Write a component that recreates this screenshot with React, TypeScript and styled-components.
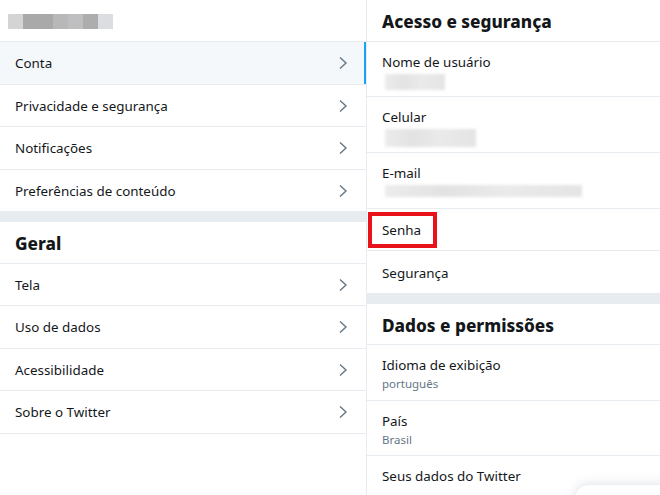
import React from "react";
import styled, { createGlobalStyle } from "styled-components";

const Global = createGlobalStyle`
  html, body { margin: 0; padding: 0; background: #ffffff; }
  body { font-family: "Noto Sans", "Open Sans", sans-serif; color: #14171a; }
  * { box-sizing: border-box; }
`;

const Page = styled.div`
  position: relative;
  display: flex;
  width: 660px;
  height: 495px;
  overflow: hidden;
  background: #fff;
`;

const LeftColumn = styled.div`
  width: 367px;
  flex: none;
  display: flex;
  flex-direction: column;
  border-right: 1px solid #e6ecf0;
`;

const RightColumn = styled.div`
  flex: 1;
  display: flex;
  flex-direction: column;
`;

const TopBar = styled.div`
  height: 42px;
  flex: none;
  display: flex;
  align-items: center;
  padding-left: 8px;
  border-bottom: 1px solid #e6ecf0;
`;

const BlurName = styled.div`
  display: flex;
  height: 15px;
  margin-top: 2px;
  filter: blur(0.6px);
`;

const BlurCell = styled.div<{ $w: number; $c: string }>`
  width: ${(p) => p.$w}px;
  height: 100%;
  background: ${(p) => p.$c};
`;

const MenuRow = styled.div<{ $active?: boolean }>`
  height: 42.5px;
  flex: none;
  display: flex;
  align-items: center;
  justify-content: space-between;
  padding: 1px 18px 0 15px;
  border-bottom: 1px solid #e6ecf0;
  background: ${(p) => (p.$active ? "#f5f8fa" : "#fff")};
  box-shadow: ${(p) => (p.$active ? "inset -2px 0 0 #1da1f2" : "none")};
  font-size: 13.4px;
`;

const Chevron = styled.svg`
  width: 10px;
  height: 14px;
  color: #657786;
`;

const Band = styled.div`
  height: 10px;
  flex: none;
  background: #e6ecf0;
`;

const SectionHeader = styled.div`
  height: 41.5px;
  flex: none;
  display: flex;
  align-items: center;
  padding: 3px 0 0 15px;
  border-bottom: 1px solid #e6ecf0;
  font-size: 17.2px;
  font-weight: 800;
  color: #14171a;
`;

const InfoRow = styled.div<{ $tall?: boolean }>`
  height: ${(p) => (p.$tall ? "55.7px" : "42.5px")};
  flex: none;
  display: flex;
  flex-direction: column;
  justify-content: ${(p) => (p.$tall ? "flex-start" : "center")};
  padding: ${(p) => (p.$tall ? "10px 15px 0" : "2px 15px 0")};
  border-bottom: 1px solid #e6ecf0;
  font-size: 13.4px;
`;

const Label = styled.div`
  line-height: 20px;
  color: #14171a;
`;

const SubText = styled.div`
  font-size: 11.5px;
  line-height: 16px;
  color: #657786;
  margin-top: 1px;
`;

const BlurValue = styled.div<{ $w: number; $h: number }>`
  width: ${(p) => p.$w}px;
  height: ${(p) => p.$h}px;
  margin-top: 2px;
  margin-left: 3px;
  background: linear-gradient(90deg, #ececec 0%, #e2e2e2 30%, #eaeaea 60%, #e4e4e4 100%);
  filter: blur(1.5px);
`;

const Highlight = styled.span`
  align-self: flex-start;
  margin-left: -14px;
  padding: 4px 12px 4px 10px;
  border: 4px solid #e8121a;
  line-height: 20px;
`;

const Drawer = styled.div`
  position: absolute;
  right: -20px;
  bottom: -30px;
  width: 105px;
  height: 40px;
  background: #fff;
  border-radius: 14px 0 0 0;
  box-shadow: 0 0 12px rgba(101, 119, 134, 0.25);
`;

const ChevronIcon = () => (
  <Chevron viewBox="0 0 10 14">
    <path d="M2 1.5 L8 7 L2 12.5" fill="none" stroke="currentColor" strokeWidth="1.4" />
  </Chevron>
);

const leftTop = ["Conta", "Privacidade e segurança", "Notificações", "Preferências de conteúdo"];
const leftBottom = ["Tela", "Uso de dados", "Acessibilidade", "Sobre o Twitter"];

export default function App() {
  return (
    <>
      <Global />
      <Page>
        <LeftColumn>
          <TopBar>
            <BlurName>
              <BlurCell $w={15} $c="#d4d4d4" />
              <BlurCell $w={30} $c="#a9a9a9" />
              <BlurCell $w={15} $c="#b8b8b8" />
              <BlurCell $w={15} $c="#bfbfc2" />
              <BlurCell $w={15} $c="#adadad" />
              <BlurCell $w={15} $c="#dcdde0" />
            </BlurName>
          </TopBar>
          {leftTop.map((t, i) => (
            <MenuRow key={t} $active={i === 0}>
              {t}
              <ChevronIcon />
            </MenuRow>
          ))}
          <Band />
          <SectionHeader>Geral</SectionHeader>
          {leftBottom.map((t) => (
            <MenuRow key={t}>
              {t}
              <ChevronIcon />
            </MenuRow>
          ))}
        </LeftColumn>
        <RightColumn>
          <SectionHeader>Acesso e segurança</SectionHeader>
          <InfoRow $tall>
            <Label>Nome de usuário</Label>
            <BlurValue $w={60} $h={16} />
          </InfoRow>
          <InfoRow $tall>
            <Label>Celular</Label>
            <BlurValue $w={91} $h={18} />
          </InfoRow>
          <InfoRow $tall>
            <Label>E-mail</Label>
            <BlurValue $w={197} $h={12} />
          </InfoRow>
          <InfoRow>
            <Highlight>Senha</Highlight>
          </InfoRow>
          <InfoRow>
            <Label>Segurança</Label>
          </InfoRow>
          <Band />
          <SectionHeader>Dados e permissões</SectionHeader>
          <InfoRow $tall>
            <Label>Idioma de exibição</Label>
            <SubText>português</SubText>
          </InfoRow>
          <InfoRow $tall>
            <Label>País</Label>
            <SubText>Brasil</SubText>
          </InfoRow>
          <InfoRow $tall>
            <Label>Seus dados do Twitter</Label>
          </InfoRow>
        </RightColumn>
        <Drawer />
      </Page>
    </>
  );
}
